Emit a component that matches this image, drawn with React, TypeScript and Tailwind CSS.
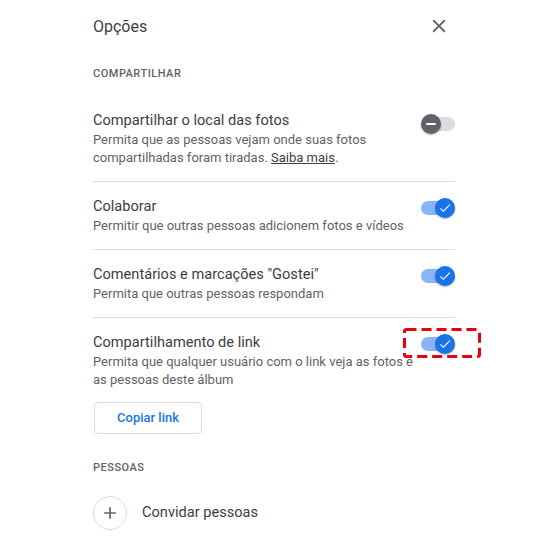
import React from "react";

function Toggle({ on, offsetTop = 3, highlight = false }: { on: boolean; offsetTop?: number; highlight?: boolean }) {
  return (
    <div className="relative shrink-0 w-[34px] h-[20px]" style={{ marginTop: offsetTop }}>
      <div className={`absolute left-0 right-0 top-[3px] h-[14px] rounded-full ${on ? "bg-[#8ab4f8]" : "bg-[#dadce0]"}`} />
      <div
        className={`absolute top-0 w-[20px] h-[20px] rounded-full flex items-center justify-center shadow-[0_1px_2px_rgba(0,0,0,0.3)] ${
          on ? "right-0 bg-[#1a73e8]" : "left-0 bg-[#5f6368]"
        }`}
      >
        {on ? (
          <svg width="14" height="14" viewBox="0 0 24 24" fill="#fff">
            <path d="M9 16.17L4.83 12l-1.42 1.41L9 19 21 7l-1.41-1.41z" />
          </svg>
        ) : (
          <div className="w-[10px] h-[2px] bg-white rounded-sm" />
        )}
      </div>
      {highlight && (
        <svg className="absolute left-[-18px] top-[-6px] pointer-events-none" width="78" height="30" viewBox="0 0 78 30">
          <rect x="1.5" y="1.5" width="75" height="27" rx="2" fill="none" stroke="#e8000b" strokeWidth="3" strokeDasharray="10 5" />
        </svg>
      )}
    </div>
  );
}

function Row({
  title,
  children,
  on,
  border = true,
  toggleTop = 3,
  highlight = false,
  extra,
}: {
  title: string;
  children: React.ReactNode;
  on: boolean;
  border?: boolean;
  toggleTop?: number;
  highlight?: boolean;
  extra?: React.ReactNode;
}) {
  return (
    <div className={`pt-[13px] ${border ? "pb-[14px] border-b border-[#dadce0]" : ""}`}>
      <div className="flex items-start justify-between">
        <div className="flex flex-col">
          <div className="text-[14.6px] leading-[22px] text-[#3c4043]">{title}</div>
          <p className="text-[13px] leading-[18px] text-[#5f6368] w-[322px]">{children}</p>
        </div>
        <Toggle on={on} offsetTop={toggleTop} highlight={highlight} />
      </div>
      {extra}
    </div>
  );
}

export default function App() {
  return (
    <div className="w-[558px] h-[539px] bg-white overflow-hidden" style={{ fontFamily: "Roboto, 'Noto Sans', sans-serif" }}>
      <div className="ml-[93px] w-[362px]">
        <div className="h-[52px] flex items-center justify-between">
          <div className="pt-[2px] text-[16px] text-[#3c4043]">Opções</div>
          <div className="w-[32px] h-[32px] flex items-center justify-center">
            <svg width="22" height="22" viewBox="0 0 24 24" fill="#5f6368">
              <path d="M19 6.41L17.59 5 12 10.59 6.41 5 5 6.41 10.59 12 5 17.59 6.41 19 12 13.41 17.59 19 19 17.59 13.41 12z" />
            </svg>
          </div>
        </div>
        <div className="h-[44px] pt-[1px] flex items-center text-[11px] font-medium tracking-[0.5px] text-[#5f6368]">COMPARTILHAR</div>

        <Row title="Compartilhar o local das fotos" on={false} toggleTop={5}>
          Permita que as pessoas vejam onde suas fotos compartilhadas foram tiradas. <span className="underline text-[#3c4043]">Saiba mais</span>.
        </Row>
        <Row title="Colaborar" on={true}>
          Permitir que outras pessoas adicionem fotos e vídeos
        </Row>
        <Row title={'Comentários e marcações "Gostei"'} on={true}>
          Permita que outras pessoas respondam
        </Row>
        <Row
          title="Compartilhamento de link"
          on={true}
          border={false}
          highlight
          extra={
            <button className="mt-[13px] ml-[1px] w-[108px] h-[32px] border border-[#dadce0] rounded-[4px] text-[13px] font-medium text-[#1a73e8] flex items-center justify-center">
              Copiar link
            </button>
          }
        >
          Permita que qualquer usuário com o link veja as fotos e as pessoas deste álbum
        </Row>

        <div className="mt-[12px] h-[44px] pt-[1px] flex items-center text-[11px] font-medium tracking-[0.5px] text-[#5f6368]">PESSOAS</div>
        <div className="mt-[6px] flex items-center">
          <div className="w-[34px] h-[34px] rounded-full border border-[#dadce0] flex items-center justify-center">
            <svg width="20" height="20" viewBox="0 0 24 24" fill="#5f6368">
              <path d="M19 13h-6v6h-2v-6H5v-2h6V5h2v6h6v2z" />
            </svg>
          </div>
          <div className="ml-[15px] text-[14.6px] text-[#3c4043]">Convidar pessoas</div>
        </div>
      </div>
    </div>
  );
}
